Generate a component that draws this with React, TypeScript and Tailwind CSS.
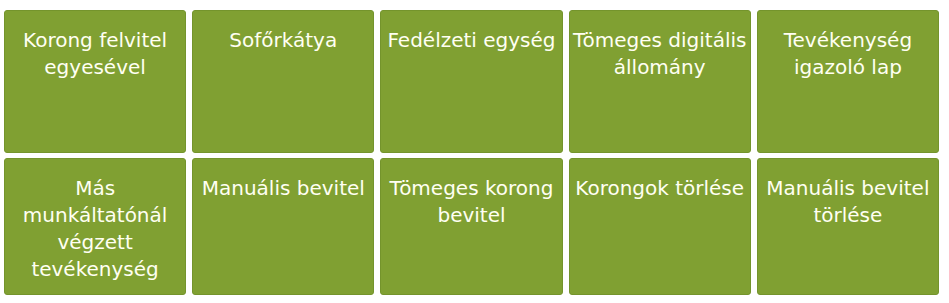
const tiles = [
  "Korong felvitel egyesével",
  "Sofőrkátya",
  "Fedélzeti egység",
  "Tömeges digitális állomány",
  "Tevékenység igazoló lap",
  "Más munkáltatónál végzett tevékenység",
  "Manuális bevitel",
  "Tömeges korong bevitel",
  "Korongok törlése",
  "Manuális bevitel törlése",
];

export default function App() {
  return (
    <div className="h-[303px] w-[949px] overflow-hidden bg-white pl-[4px] pt-[10px]">
      <div className="grid w-[935px] grid-cols-5 grid-rows-[143px_137px] gap-x-[6px] gap-y-[5px]">
        {tiles.map((t) => (
          <button
            key={t}
            type="button"
            className="flex cursor-pointer items-start justify-center rounded-[3px] border border-[#74942c] bg-[#80a032] px-[2px] pt-[16px] text-center font-['DejaVu_Sans',sans-serif] text-[20px] leading-[27px] text-[#fffff2] hover:bg-[#8aab38]"
          >
            {t}
          </button>
        ))}
      </div>
    </div>
  );
}
